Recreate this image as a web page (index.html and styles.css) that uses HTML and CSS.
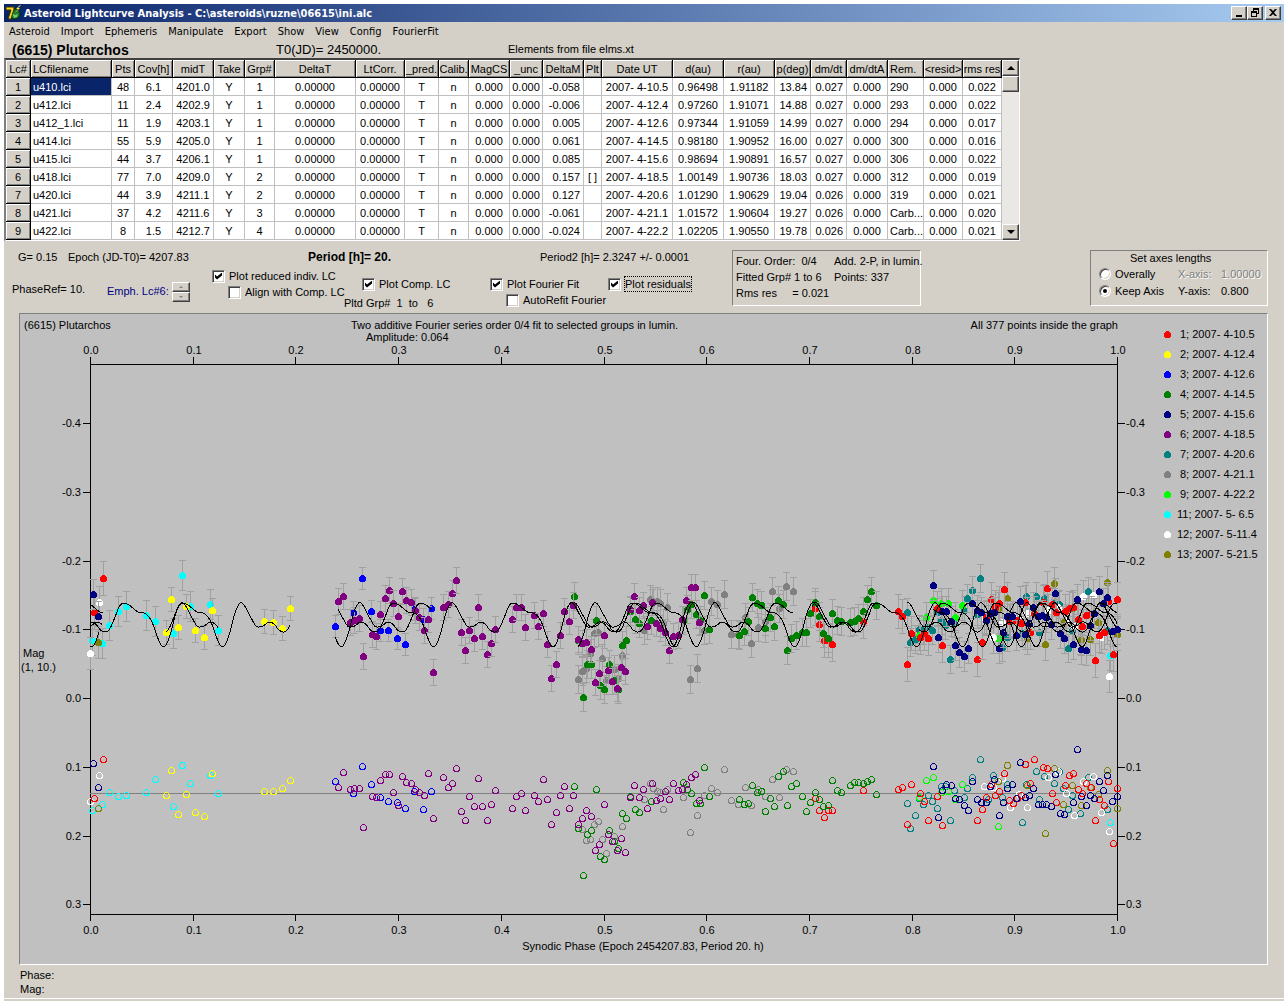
FILE: index.html
```html
<!DOCTYPE html>
<html lang="en">

<head>
    <meta charset="UTF-8">
    <meta name="viewport" content="width=device-width, initial-scale=1.0">
    <title>Asteroid Lightcurve Analysis</title>
    <link rel="stylesheet" href="styles.css">
</head>

<body>
    <div class="window">
        <header class="titlebar">
            <svg class="app-icon" viewBox="0 0 16 16" width="16" height="16">
                <circle cx="10" cy="9" r="5" fill="#1d7a2e" stroke="#0a2a10" />
                <path d="M7 8l3 2 3-1-1 3-3 1z" fill="#6fd06a" />
                <path d="M1 2h8v2L6 14H3L6 5H1z" fill="#f4d822" stroke="#3a3200" stroke-width="1" />
                <path d="M15 0l-4 4h2l-3 4 5-5h-2l3-3z" fill="#ffee30" />
            </svg>
            <h1>Asteroid Lightcurve Analysis - C:\asteroids\ruzne\06615\ini.alc</h1>
            <div class="win-buttons">
                <button type="button" aria-label="Minimize">
                    <svg viewBox="0 0 12 10" width="12" height="10"><path d="M3 7h6v2H3z" /></svg>
                </button>
                <button type="button" aria-label="Restore">
                    <svg viewBox="0 0 12 10" width="12" height="10">
                        <path d="M4 0h6v6H8V5h1V2H5v1H4zM2 3h6v6H2zM3 5v3h4V5z" fill-rule="evenodd" />
                    </svg>
                </button>
                <button type="button" class="close" aria-label="Close">
                    <svg viewBox="0 0 12 10" width="12" height="10">
                        <path d="M2 1h2l2 2 2-2h2L7 4.500l3 3.500H8L6 6 4 8H2l3-3.500z" />
                    </svg>
                </button>
            </div>
        </header>

        <nav class="menu">
            <a href="#">Asteroid</a>
            <a href="#">Import</a>
            <a href="#">Ephemeris</a>
            <a href="#">Manipulate</a>
            <a href="#">Export</a>
            <a href="#">Show</a>
            <a href="#">View</a>
            <a href="#">Config</a>
            <a href="#">FourierFit</a>
        </nav>

        <div class="object">
            <h2>(6615) Plutarchos</h2>
            <span class="epoch0">T0(JD)= 2450000.</span>
            <span>Elements from file elms.xt</span>
        </div>

        <div class="grid-box">
            <table id="lc-table">
                <colgroup id="lc-cols"></colgroup>
                <thead>
                    <tr id="lc-head"></tr>
                </thead>
                <tbody id="lc-body"></tbody>
            </table>
            <div class="scrollbar">
                <button type="button" aria-label="Scroll up"><span class="arrow up"></span></button>
                <div class="thumb"></div>
                <button type="button" class="down" aria-label="Scroll down"><span class="arrow"></span></button>
            </div>
        </div>

        <div class="params">
            <div class="settings">
                <div class="periods">
                    <span>G= 0.15</span>
                    <span>Epoch (JD-T0)= 4207.83</span>
                    <b>Period [h]= 20.</b>
                    <span>Period2 [h]= 2.3247 +/- 0.0001</span>
                </div>
                <div class="options">
                    <span class="phase-ref">PhaseRef= 10.</span>
                    <span class="emph">Emph. Lc#6:</span>
                    <div class="spinner">
                        <button type="button" aria-label="Next curve"><span class="arrow up"></span></button>
                        <button type="button" aria-label="Previous curve"><span class="arrow"></span></button>
                    </div>
                    <div class="checks">
                        <label><input type="checkbox" checked><span>Plot reduced indiv. LC</span></label>
                        <label class="sub"><input type="checkbox"><span>Align with Comp. LC</span></label>
                    </div>
                    <div class="checks low">
                        <label class="comp"><input type="checkbox" checked><span>Plot Comp. LC</span></label>
                        <span class="plotted">Pltd Grp#&nbsp; 1 &nbsp;to &nbsp; 6</span>
                    </div>
                    <div class="checks low">
                        <label><input type="checkbox" checked><span>Plot Fourier Fit</span></label>
                        <label class="sub"><input type="checkbox"><span>AutoRefit Fourier</span></label>
                    </div>
                    <div class="checks low">
                        <label><input type="checkbox" checked><span class="focused">Plot residuals</span></label>
                    </div>
                </div>
            </div>

            <div class="sunken fit-info">
                <span>Four. Order:&nbsp; 0/4</span>
                <span>Add. 2-P, in lumin.</span>
                <span>Fitted Grp# 1 to 6</span>
                <span>Points: 337</span>
                <span>Rms res &nbsp; &nbsp; = 0.021</span>
            </div>

            <div class="sunken axes">
                <div class="axes-title">Set axes lengths</div>
                <label><input type="radio" name="axes"><span>Overally</span></label>
                <span class="disabled">X-axis:</span>
                <span class="disabled">1.00000</span>
                <label><input type="radio" name="axes" checked><span>Keep Axis</span></label>
                <span>Y-axis:</span>
                <span>0.800</span>
            </div>
        </div>

        <div class="sunken plot">
            <svg id="chart" viewBox="0 0 1247 650">
                <text x="4" y="15">(6615) Plutarchos</text>
                <text x="331" y="15">Two additive Fourier series order 0/4 fit to selected groups in lumin.</text>
                <text x="346" y="27">Amplitude: 0.064</text>
                <text x="1098" y="15" class="end">All 377 points inside the graph</text>
                <text x="3" y="343">Mag</text>
                <text x="1" y="357">(1, 10.)</text>
                <text x="623" y="636" class="mid">Synodic Phase (Epoch 2454207.83, Period 20. h)</text>
            </svg>
        </div>

        <footer class="status">
            <div>Phase:</div>
            <div>Mag:</div>
        </footer>
    </div>

    <script src="lightcurve.js"></script>
</body>

</html>
```

FILE: styles.css
```css
:root {
    --face: #d4d0c8;
    --shadow: #808080;
    --dark: #404040;
    --light: #ffffff;
    --plot: #c0c0c0;
    --select: #0a246a;
}

* {
    box-sizing: border-box;
    margin: 0;
    padding: 0;
}

body {
    background: #fff;
    color: #000;
    font-family: "Liberation Sans", Arial, sans-serif;
    font-size: 11px;
    line-height: 14px;
    padding: 4px 4px 0;
}

.window {
    background: var(--face);
    padding-bottom: 2px;
}

button {
    background: var(--face);
    border: 1px solid;
    border-color: var(--light) var(--dark) var(--dark) var(--light);
    box-shadow: inset -1px -1px 0 var(--shadow);
    display: flex;
    align-items: center;
    justify-content: center;
}

/* title bar */
.titlebar {
    display: flex;
    align-items: center;
    height: 18px;
    padding: 0 3px 0 1px;
    background: linear-gradient(to right, #0a246a, #a6caf0);
}

.titlebar h1 {
    flex: 1;
    margin-left: 3px;
    color: #fff;
    font: bold 11px "DejaVu Sans Condensed", "DejaVu Sans", sans-serif;
    font-stretch: condensed;
    white-space: nowrap;
}

.win-buttons {
    display: flex;
}

.win-buttons button {
    width: 16px;
    height: 14px;
}

.win-buttons .close {
    margin-left: 2px;
}

/* menu */
.menu {
    display: flex;
    gap: 11px;
    height: 20px;
    padding: 3px 5px;
    font-family: "DejaVu Sans Condensed", "DejaVu Sans", sans-serif;
}

.menu a {
    color: #000;
    text-decoration: none;
}

.object {
    display: flex;
    height: 16px;
    padding-left: 8px;
}

.object h2 {
    width: 264px;
    font-size: 14px;
    line-height: 16px;
}

.object .epoch0 {
    width: 232px;
    font-size: 13px;
    line-height: 16px;
}

/* lightcurve table */
.grid-box {
    display: flex;
    width: max-content;
    border: 1px solid;
    border-color: var(--dark) var(--light) var(--light) var(--shadow);
    border-top-width: 2px;
    border-left-width: 2px;
    background: #fff;
}

table {
    table-layout: fixed;
    border-collapse: separate;
    border-spacing: 0;
    width: 996px;
}

th,
td {
    height: 18px;
    overflow: hidden;
    white-space: nowrap;
    text-align: center;
    border-right: 1px solid var(--plot);
    border-bottom: 1px solid var(--plot);
}

th {
    background: var(--face);
    border-color: #000;
    box-shadow: inset 1px 1px 0 var(--light), inset -1px -1px 0 var(--shadow);
    font-weight: normal;
}

.left {
    padding-left: 2px;
    text-align: left;
}

td.right {
    padding-right: 3px;
    text-align: right;
}

td.selected {
    background: var(--select);
    color: #fff;
}

.scrollbar {
    display: flex;
    flex-direction: column;
    width: 17px;
    background: #eae8e4;
}

.scrollbar button {
    width: 17px;
    height: 16px;
}

.scrollbar .down {
    margin-top: auto;
}

.thumb {
    height: 16px;
    background: var(--face);
    border: 1px solid;
    border-color: var(--light) var(--dark) var(--dark) var(--light);
    box-shadow: inset -1px -1px 0 var(--shadow);
}

.arrow {
    border: 4px solid transparent;
    border-top-color: #000;
    border-bottom: 0;
}

.arrow.up {
    border-top: 0;
    border-bottom: 4px solid #000;
}

/* settings */
.params {
    display: flex;
    height: 72px;
    padding: 9px 16px 0 8px;
    white-space: nowrap;
}

.settings {
    width: 720px;
}

.periods {
    display: grid;
    grid-template-columns: 50px 240px 232px 1fr;
    padding-left: 6px;
}

.periods b {
    font-size: 12px;
}

.options {
    display: grid;
    grid-template-columns: 95px 65px 40px 132px 146px 118px 1fr;
    align-items: start;
    padding-top: 4px;
}

.phase-ref {
    padding-top: 14px;
}

.emph {
    padding-top: 16px;
    color: #000080;
}

.spinner {
    width: 18px;
    margin-top: 14px;
}

.spinner button {
    width: 18px;
    height: 10px;
}

.spinner .arrow {
    border-width: 2px;
    border-top-color: var(--shadow);
    border-bottom-width: 0;
}

.spinner .arrow.up {
    border-top-width: 0;
    border-bottom: 2px solid var(--shadow);
}

.checks.low {
    padding-top: 8px;
}

label {
    display: flex;
    align-items: center;
    gap: 4px;
    height: 16px;
}

.sub {
    margin-left: 16px;
}

.comp {
    margin-left: 18px;
}

.plotted {
    display: block;
    padding-top: 4px;
}

.focused {
    outline: 1px dotted #000;
}

input {
    appearance: none;
    flex: none;
    width: 13px;
    height: 13px;
    background: #fff;
    border: 1px solid;
    border-color: var(--shadow) var(--light) var(--light) var(--shadow);
    box-shadow: inset 1px 1px 0 var(--dark), inset -1px -1px 0 var(--face);
}

input[type="checkbox"]:checked::before {
    content: "";
    display: block;
    width: 7px;
    height: 7px;
    margin: 2px;
    background: #000;
    clip-path: polygon(0 29%, 29% 57%, 100% 0, 100% 43%, 29% 100%, 0 71%);
}

input[type="radio"] {
    width: 12px;
    height: 12px;
    border-radius: 50%;
}

input[type="radio"]:checked::before {
    content: "";
    display: block;
    width: 4px;
    height: 4px;
    margin: 3px;
    border-radius: 50%;
    background: #000;
}

.sunken {
    border: 1px solid;
    border-color: var(--shadow) var(--light) var(--light) var(--shadow);
}

.fit-info {
    display: grid;
    grid-template-columns: 98px 1fr;
    grid-auto-rows: 16px;
    width: 189px;
    height: 56px;
    padding: 3px 0 0 3px;
}

.axes {
    display: grid;
    grid-template-columns: 79px 43px 1fr;
    grid-template-rows: 14px 17px 17px;
    align-items: center;
    width: 178px;
    height: 56px;
    margin-left: auto;
    padding-left: 8px;
}

.axes-title {
    grid-column: 1 / 4;
    padding-left: 31px;
}

.disabled {
    color: var(--shadow);
    text-shadow: 1px 1px 0 var(--light);
}

/* plot */
.plot {
    margin: 0 16px 0 15px;
    background: var(--plot);
}

#chart {
    display: block;
    width: 100%;
    height: auto;
}

#chart .mid {
    text-anchor: middle;
}

#chart .end {
    text-anchor: end;
}

#chart line,
#chart path,
#chart circle {
    fill: none;
    stroke: #000;
    shape-rendering: crispEdges;
}

#chart .zero {
    stroke: #808080;
}

#chart .bar {
    stroke: #a0a0a0;
}

#chart .dot {
    stroke: none;
}

.status {
    height: 34px;
    padding: 3px 16px 0;
    border-bottom: 1px solid var(--light);
}
```

FILE: lightcurve.js
```js
// ---- table ----
var columns = [
    ["Lc#", 25], ["LCfilename", 81, "left"], ["Pts", 23], ["Cov[h]", 38], ["midT", 41], ["Take", 31],
    ["Grp#", 30], ["DeltaT", 81], ["LtCorr.", 49], ["_pred.", 34], ["Calib.", 30], ["MagCS", 41],
    ["_unc", 33], ["DeltaM", 41, "right"], ["Plt", 18], ["Date UT", 71], ["d(au)", 51], ["r(au)", 51],
    ["p(deg)", 36, "right"], ["dm/dt", 36, "right"], ["dm/dtA", 41], ["Rem.", 36, "left"],
    ["<resid>", 39], ["rms res", 39]
];

// file, pts, cov, midT, grp, deltaM, plt, date, d, r, phase angle, dm/dt, remark, rms
var curves = [
    ["u410.lci", 48, "6.1", "4201.0", 1, "-0.058", "", "2007- 4-10.5", "0.96498", "1.91182", "13.84", "0.027", "290", "0.022"],
    ["u412.lci", 11, "2.4", "4202.9", 1, "-0.006", "", "2007- 4-12.4", "0.97260", "1.91071", "14.88", "0.027", "293", "0.022"],
    ["u412_1.lci", 11, "1.9", "4203.1", 1, "0.005", "", "2007- 4-12.6", "0.97344", "1.91059", "14.99", "0.027", "294", "0.017"],
    ["u414.lci", 55, "5.9", "4205.0", 1, "0.061", "", "2007- 4-14.5", "0.98180", "1.90952", "16.00", "0.027", "300", "0.016"],
    ["u415.lci", 44, "3.7", "4206.1", 1, "0.085", "", "2007- 4-15.6", "0.98694", "1.90891", "16.57", "0.027", "306", "0.022"],
    ["u418.lci", 77, "7.0", "4209.0", 2, "0.157", "[ ]", "2007- 4-18.5", "1.00149", "1.90736", "18.03", "0.027", "312", "0.019"],
    ["u420.lci", 44, "3.9", "4211.1", 2, "0.127", "", "2007- 4-20.6", "1.01290", "1.90629", "19.04", "0.026", "319", "0.021"],
    ["u421.lci", 37, "4.2", "4211.6", 3, "-0.061", "", "2007- 4-21.1", "1.01572", "1.90604", "19.27", "0.026", "Carb...", "0.020"],
    ["u422.lci", 8, "1.5", "4212.7", 4, "-0.024", "", "2007- 4-22.2", "1.02205", "1.90550", "19.78", "0.026", "Carb...", "0.021"]
];

columns.forEach(function (c) {
    var col = document.createElement("col");
    col.style.width = c[1] + "px";
    document.getElementById("lc-cols").appendChild(col);

    var th = document.createElement("th");
    th.textContent = c[0];
    if (c[2] == "left") th.className = "left";
    document.getElementById("lc-head").appendChild(th);
});

curves.forEach(function (c, row) {
    var cells = [row + 1, c[0], c[1], c[2], c[3], "Y", c[4], "0.00000", "0.00000", "T", "n", "0.000",
        "0.000", c[5], c[6], c[7], c[8], c[9], c[10], c[11], "0.000", c[12], "0.000", c[13]];
    var tr = document.createElement("tr");
    cells.forEach(function (value, i) {
        var cell = document.createElement(i == 0 ? "th" : "td");
        cell.textContent = value;
        cell.className = columns[i][2] || "";
        if (row == 0 && i == 1) cell.className += " selected";
        tr.appendChild(cell);
    });
    document.getElementById("lc-body").appendChild(tr);
});

// ---- chart ----
var svg = document.getElementById("chart");
var LEFT = 70, RIGHT = 1097, TOP = 50, BOTTOM = 600;
var DATA_TOP = 226;

function add(name, attrs, text) {
    var el = document.createElementNS("http://www.w3.org/2000/svg", name);
    for (var key in attrs) el.setAttribute(key, attrs[key]);
    if (text) el.textContent = text;
    svg.appendChild(el);
}

function line(x1, y1, x2, y2, cls) {
    add("line", { x1: x1, y1: y1, x2: x2, y2: y2, "class": cls || "axis" });
}

// each point: x, magnitude, residual
var series = {
    1: { label: "1; 2007- 4-10.5", color: "#ff0000", err: 17, points: [
        [83,38,219],[74,72,258],[795,68,258],[799,84,270],[804,100,277],[808,100,270],[812,104,270],[843,81,250],
        [878,71,249],[882,76,247],[887,124,284],[891,93,244],[900,97,253],[904,93,261],[908,98,280],[917,68,256],
        [922,105,285],[957,119,280],[962,102,269],[966,77,257],[971,59,244],[975,67,255],[979,63,251],[984,49,233],
        [989,81,260],[993,80,263],[997,80,258],[1001,83,255],[1005,62,224],[1010,92,243],[1014,73,219],[1023,62,227],
        [1027,48,228],[1032,64,253],[1036,72,262],[1045,71,245],[1049,68,235],[1053,67,233],[1058,79,249],[1062,86,253],
        [1066,75,243],[1071,73,247],[1075,120,280],[1079,95,259],[1084,92,265],[1088,61,241],[1093,114,303],[1097,59,248]] },
    2: { label: "2; 2007- 4-12.4", color: "#ffff00", err: 12, points: [
        [146,92,255],[151,59,230],[158,87,274],[166,66,254],[175,90,272],[184,97,276],[192,70,233],[244,81,251],
        [253,82,251],[262,88,248],[270,68,240]] },
    3: { label: "3; 2007- 4-12.6", color: "#0000ff", err: 11, points: [
        [315,86,241],[333,72,253],[342,38,226],[351,71,244],[360,90,257],[368,90,261],[377,98,262],[385,104,268],
        [394,69,251],[403,79,269],[411,68,251]] },
    4: { label: "4; 2007- 4-14.5", color: "#008000", err: 14, points: [
        [554,56,246],[558,100,288],[563,157,335],[567,124,294],[571,124,290],[576,80,249],[580,145,316],[584,149,319],
        [589,124,290],[594,140,301],[598,149,308],[602,105,273],[606,100,278],[610,71,256],[615,79,269],[619,83,272],
        [631,80,261],[663,80,242],[667,69,249],[671,64,253],[676,74,263],[680,80,263],[684,55,227],[689,89,256],
        [719,95,259],[724,91,264],[728,81,263],[732,57,245],[737,63,252],[741,65,251],[745,88,271],[750,77,258],
        [754,86,266],[758,60,236],[763,64,231],[767,110,265],[771,98,246],[776,95,243],[782,92,256],[786,92,271],
        [790,73,262],[795,62,252],[799,76,259],[803,93,266],[808,98,265],[812,73,240],[817,80,250],[821,81,252],
        [830,82,245],[834,81,242],[838,78,242],[843,71,243],[847,59,241],[851,51,239],[856,65,254]] },
    5: { label: "5; 2007- 4-15.6", color: "#000080", err: 15, points: [
        [73,54,223],[78,76,247],[913,45,226],[918,97,277],[922,71,250],[926,71,244],[931,81,245],[935,105,258],
        [939,112,259],[944,116,265],[948,108,270],[952,63,241],[957,70,259],[961,72,262],[966,80,262],[970,73,246],
        [974,72,239],[979,108,275],[983,92,262],[987,76,248],[992,76,244],[996,95,258],[1000,61,222],[1005,94,257],
        [1009,83,255],[1013,67,248],[1018,76,264],[1022,75,264],[1026,77,264],[1031,84,266],[1035,53,234],[1040,93,273],
        [1044,98,274],[1053,104,262],[1057,59,209],[1061,109,256],[1066,110,265],[1070,85,255],[1074,73,258],[1079,51,241],
        [1083,63,250],[1087,57,235],[1092,91,261],[1097,89,256]] },
    6: { label: "6; 2007- 4-18.5", color: "#800080", err: 13, points: [
        [318,61,247],[323,56,232],[330,82,249],[334,80,248],[339,78,248],[343,116,287],[352,94,256],[356,96,257],
        [360,74,240],[365,58,234],[369,50,234],[373,63,252],[378,76,265],[382,51,236],[386,60,242],[391,62,243],
        [395,70,249],[399,77,252],[404,90,255],[408,79,233],[413,132,278],[423,67,237],[428,64,247],[432,53,243],
        [436,40,228],[441,92,271],[445,110,280],[449,90,256],[454,98,266],[458,67,238],[462,96,266],[467,114,280],
        [471,103,264],[475,89,250],[492,79,268],[496,67,256],[501,67,253],[505,87,270],[514,75,255],[518,86,261],
        [523,73,239],[527,104,259],[531,138,284],[536,124,272],[540,95,255],[544,71,246],[549,81,268],[553,65,255],
        [558,99,284],[562,103,278],[566,102,270],[571,109,276],[575,142,310],[579,133,304],[584,95,264],[588,130,294],
        [592,141,301],[597,148,310],[601,127,298],[605,131,312],[610,69,257],[614,56,245],[619,70,257],[623,65,249],
        [627,86,268],[632,62,243],[636,83,260],[640,88,258],[645,92,251],[649,110,259],[653,96,243],[658,95,250],
        [662,79,249],[666,60,244],[671,47,237],[675,47,234],[679,82,260]] },
    7: { label: "7; 2007- 4-20.6", color: "#008080", err: 14, points: [
        [887,72,263],[890,102,288],[895,99,275],[899,89,258],[903,90,264],[908,87,255],[912,90,261],[917,72,268],
        [921,80,246],[925,85,246],[930,119,280],[934,83,250],[944,70,257],[947,58,248],[952,50,237],[957,74,259],
        [960,38,219],[968,75,259],[973,68,235],[982,107,257],[987,97,244],[1002,93,282],[1006,56,244],[1016,56,231],
        [1019,92,259],[1024,58,236],[1034,62,243],[1039,64,231],[1043,82,248],[1048,108,269],[1052,90,255],[1060,100,273],
        [1068,51,237],[1087,90,269]] },
    8: { label: "8; 2007- 4-21.1", color: "#808080", err: 14, points: [
        [558,139,288],[562,131,289],[566,128,300],[570,113,299],[574,93,284],[578,92,281],[582,118,299],[586,140,313],
        [594,129,296],[598,138,308],[602,115,286],[624,90,259],[630,59,243],[633,61,248],[637,61,251],[640,63,252],
        [643,83,269],[647,67,249],[663,80,257],[670,139,292],[677,128,275],[684,90,255],[691,61,248],[697,64,252],
        [704,54,229],[711,94,260],[718,94,264],[725,77,247],[731,103,265],[738,87,249],[745,81,256],[752,51,239],
        [759,68,257],[766,46,229],[773,51,231]] },
    9: { label: "9; 2007- 4-22.2", color: "#00ff00", err: 15, points: [
        [899,95,257],[906,77,240],[913,60,237],[921,63,252],[928,63,251],[935,77,259],[942,65,244],[978,98,286]] },
    11: { label: "11; 2007- 5- 6.5", color: "#00ffff", err: 15, points: [
        [72,100,270],[82,103,264],[89,85,252],[98,71,256],[106,66,255],[126,75,252],[135,81,239],[153,93,266],
        [162,35,225],[170,66,243],[190,64,235],[198,90,253],[1090,115,282]] },
    12: { label: "12; 2007- 5-11.4", color: "#ffffff", err: 16, points: [
        [79,62,235],[70,113,261],[964,77,246],[973,97,247],[982,82,238],[990,80,267],[999,78,254],[1007,73,267],
        [1028,70,237],[1038,67,231],[1046,80,253],[1054,86,275],[1063,56,241],[1073,55,236],[1081,97,272],[1089,136,291]] },
    13: { label: "13; 2007- 5-21.5", color: "#808000", err: 16, points: [
        [78,102,268],[978,68,241],[987,58,225],[1007,98,245],[1025,104,293],[1034,43,228],[1043,82,264],[1052,68,245],
        [1061,99,265],[1070,99,247],[1078,82,254],[1087,42,230],[1097,94,268]] }
};

// frame and ticks
line(LEFT, TOP, RIGHT, TOP);
line(LEFT, BOTTOM, RIGHT, BOTTOM);
line(LEFT, TOP - 7, LEFT, BOTTOM + 7);
line(RIGHT, TOP - 7, RIGHT, BOTTOM + 7);

for (var i = 0; i <= 10; i++) {
    var tx = Math.round(LEFT + (RIGHT - LEFT) * i / 10);
    line(tx, TOP - 7, tx, TOP);
    line(tx, BOTTOM, tx, BOTTOM + 7);
    add("text", { x: tx + 1, y: 40, "class": "mid" }, (i / 10).toFixed(1));
    add("text", { x: tx + 1, y: 620, "class": "mid" }, (i / 10).toFixed(1));
}

["-0.4", "-0.3", "-0.2", "-0.1", "0.0", "0.1", "0.2", "0.3"].forEach(function (mag, i) {
    var ty = Math.round(109 + i * 68.75);
    line(LEFT - 7, ty, LEFT, ty);
    line(RIGHT, ty, RIGHT + 8, ty);
    add("text", { x: LEFT - 9, y: ty + 4, "class": "end" }, mag);
    add("text", { x: RIGHT + 9, y: ty + 4 }, mag);
});

line(LEFT, 479, RIGHT, 479, "zero");

// the emphasised curve goes last
[8, 7, 9, 11, 12, 13, 1, 2, 3, 4, 5, 6].forEach(function (n) {
    var s = series[n];
    s.points.forEach(function (p) {
        var y = DATA_TOP + p[1];
        add("path", {
            d: "M" + p[0] + " " + (y - s.err) + "v" + 2 * s.err + "m-3 0h7m-7 " + (-2 * s.err) + "h7",
            "class": "bar"
        });
        add("circle", { cx: p[0] + 0.5, cy: y + 0.5, r: 3.5, style: "fill:" + s.color, "class": "dot" });
        add("circle", { cx: p[0] + 0.5, cy: DATA_TOP + p[2] + 0.5, r: 3, style: "stroke:" + s.color });
    });
});

// Fourier fit over one 2.3247 h cycle, from its main maximum
var CYCLE = (RIGHT - LEFT) * 2.3247 / 20;
var knots = [
    [0, 63], [5, 65], [14, 72], [22, 74], [28, 82], [33, 96], [38, 106], [42, 105], [47, 92], [52, 73], [57, 63],
    [61, 65], [67, 76], [73, 86], [76, 87], [80, 86], [86, 82], [91, 84], [96, 90], [101, 92], [105, 89],
    [110, 78], [115, 66], [CYCLE, 63]
];

function slope(i) {
    var last = knots.length - 1;
    if (i == 0 || i == last) return 0;
    return (knots[i + 1][1] - knots[i - 1][1]) / (knots[i + 1][0] - knots[i - 1][0]);
}

function fit(x) {
    x = ((x % CYCLE) + CYCLE) % CYCLE;
    var i = 0;
    while (i < knots.length - 2 && knots[i + 1][0] < x) i++;
    var a = knots[i], b = knots[i + 1];
    var h = b[0] - a[0], t = (x - a[0]) / h;
    return a[1] * (1 + 2 * t) * (1 - t) * (1 - t) + slope(i) * h * t * (1 - t) * (1 - t) +
        b[1] * t * t * (3 - 2 * t) + slope(i + 1) * h * t * t * (t - 1);
}

// first x, last x, x of a maximum
[
    [71, 198, 104], [146, 270, 163], [315, 412, 401], [318, 679, 374], [554, 857, 735], [558, 773, 756],
    [792, 1097, 857], [887, 1097, 949], [913, 1097, 903], [899, 978, 923], [964, 1097, 938], [978, 1097, 962],
    [70, 83, 66], [70, 79, 32], [70, 82, 110]
].forEach(function (seg) {
    var d = "";
    for (var x = seg[0]; x <= seg[1]; x++) {
        d += (d ? "L" : "M") + x + " " + (DATA_TOP + fit(x - seg[2])).toFixed(1);
    }
    add("path", { d: d });
});

// legend
Object.keys(series).forEach(function (n, i) {
    add("circle", { cx: 1147.5, cy: 20.5 + 20 * i, r: 3.5, style: "fill:" + series[n].color, "class": "dot" });
    add("text", { x: n > 9 ? 1157 : 1160, y: 24 + 20 * i }, series[n].label);
});
```
